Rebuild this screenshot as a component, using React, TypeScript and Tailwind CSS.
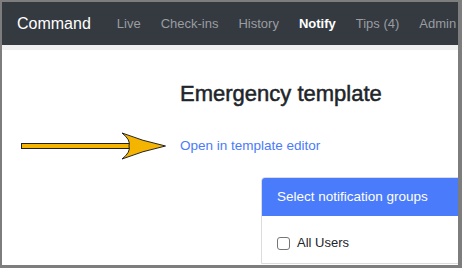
import React from "react";

export default function App() {
  const font = { fontFamily: '"Liberation Sans", Arial, sans-serif' };
  return (
    <div
      className="relative w-[462px] h-[268px] bg-[#7d7d7d] pl-[2px] pt-[2px] pr-[4px] pb-[3px]"
      style={font}
    >
      <div className="w-full h-full bg-white overflow-hidden flex flex-col">
        <nav className="h-[43px] shrink-0 bg-[#343a40] flex items-center pl-[15px] whitespace-nowrap">
          <span className="text-white text-[16px] leading-[20px] mr-[26px]">Command</span>
          <div className="flex items-center gap-[20px] text-[13px] leading-[20px] text-[#9a9da1]">
            <span>Live</span>
            <span>Check-ins</span>
            <span>History</span>
            <span className="text-white font-bold">Notify</span>
            <span>Tips (4)</span>
            <span>Admin</span>
          </div>
        </nav>
        <div className="h-[5px] shrink-0 bg-[#efefef]" />
        <div className="flex flex-col">
          <h1 className="ml-[178px] mt-[31px] text-[22px] leading-[26px] text-[#212529] whitespace-nowrap [-webkit-text-stroke:0.5px_#212529]">
            Emergency template
          </h1>
          <a className="ml-[178px] mt-[29px] text-[13.5px] leading-[20px] text-[#4a7bfa] whitespace-nowrap">
            Open in template editor
          </a>
          <div className="ml-[259px] mt-[21px] w-[240px] shrink-0 border border-[#dcdcdc] rounded-tl-[4px] overflow-hidden">
            <div className="bg-[#4a7bfa] text-white text-[13.5px] leading-[20px] px-[15px] py-[9px] whitespace-nowrap">
              Select notification groups
            </div>
            <div className="px-[15px] pt-[17px] pb-[10px]">
              <div className="flex items-center h-[20px] text-[13px] text-[#212529]">
                <div className="w-[13px] h-[13px] border border-[#767676] rounded-[3px] bg-white mr-[7px]" />
                <span>All Users</span>
              </div>
            </div>
          </div>
        </div>
      </div>
      <svg
        className="absolute left-0 top-0 pointer-events-none"
        width="462"
        height="268"
        viewBox="0 0 462 268"
      >
        <rect x="21.5" y="143.5" width="108" height="5" fill="#f5b400" stroke="#222" strokeWidth="1" />
        <path
          d="M165.5 146 Q142 141 122 133 Q131 140 129 146 Q131 152 122 159 Q142 151 165.5 146 Z"
          fill="#f5b400"
          stroke="#222"
          strokeWidth="1"
          strokeLinejoin="round"
        />
      </svg>
    </div>
  );
}
